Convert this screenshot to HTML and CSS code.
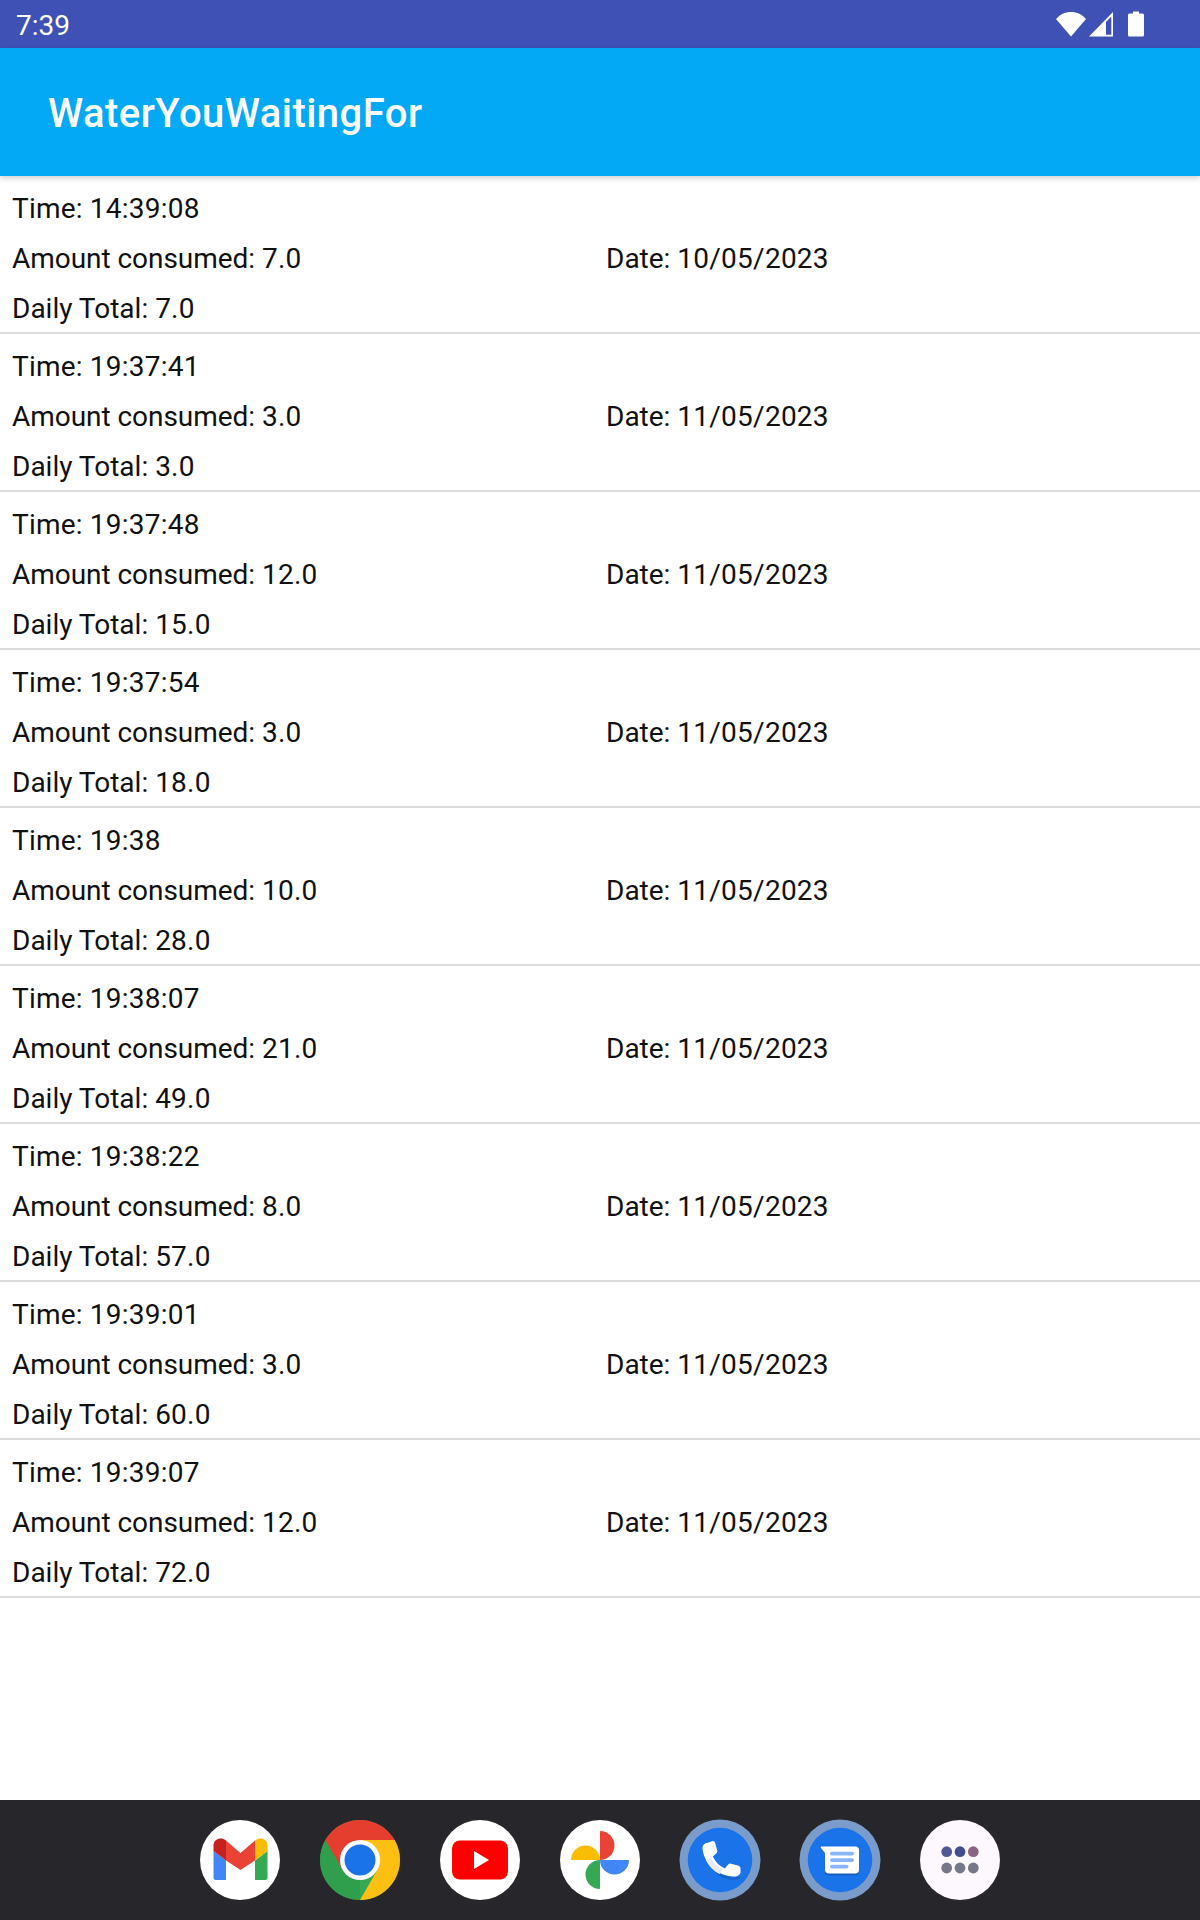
FILE: index.html
```html
<!DOCTYPE html>
<html lang="en">
<head>
    <meta charset="UTF-8">
    <meta name="viewport" content="width=device-width, initial-scale=1.0">
    <title>WaterYouWaitingFor</title>
    <link rel="stylesheet" href="styles.css">
</head>
<body>
    <div class="screen">
        <div class="status-bar">
            <span class="clock">7:39</span>
            <div class="status-icons">
                <svg class="wifi" width="30" height="26" viewBox="0 0 30 26"><path d="M0 8C4 3.500 9 1 15 1s11 2.500 15 7L15 25.500z" fill="#fff"/></svg>
                <svg class="signal" width="24" height="26" viewBox="0 0 24 26"><path d="M24 1v24.500H0z" fill="#fff"/><path d="M17 11l5.300-5.500v18.300H17z" fill="#3f51b5"/></svg>
                <svg class="battery" width="16" height="26" viewBox="0 0 16 26"><path d="M5 0.500h6v2h3.500A1.500 1.500 0 0 1 16 4v20a1.500 1.500 0 0 1-1.500 1.500h-13A1.500 1.500 0 0 1 0 24V4a1.500 1.500 0 0 1 1.500-1.500H5z" fill="#fff"/></svg>
            </div>
        </div>
        <header class="app-bar">WaterYouWaitingFor</header>

        <main class="list">
            <div class="entry">
                <p><span class="time">Time:</span> <span class="val">14:39:08</span></p>
                <div class="entry-row"><p><span class="amount">Amount consumed:</span> <span class="val">7.0</span></p><p>Date: <span class="val">10/05/2023</span></p></div>
                <p>Daily Total: <span class="val">7.0</span></p>
            </div>
            <div class="entry">
                <p><span class="time">Time:</span> <span class="val">19:37:41</span></p>
                <div class="entry-row"><p><span class="amount">Amount consumed:</span> <span class="val">3.0</span></p><p>Date: <span class="val">11/05/2023</span></p></div>
                <p>Daily Total: <span class="val">3.0</span></p>
            </div>
            <div class="entry">
                <p><span class="time">Time:</span> <span class="val">19:37:48</span></p>
                <div class="entry-row"><p><span class="amount">Amount consumed:</span> <span class="val">12.0</span></p><p>Date: <span class="val">11/05/2023</span></p></div>
                <p>Daily Total: <span class="val">15.0</span></p>
            </div>
            <div class="entry">
                <p><span class="time">Time:</span> <span class="val">19:37:54</span></p>
                <div class="entry-row"><p><span class="amount">Amount consumed:</span> <span class="val">3.0</span></p><p>Date: <span class="val">11/05/2023</span></p></div>
                <p>Daily Total: <span class="val">18.0</span></p>
            </div>
            <div class="entry">
                <p><span class="time">Time:</span> <span class="val">19:38</span></p>
                <div class="entry-row"><p><span class="amount">Amount consumed:</span> <span class="val">10.0</span></p><p>Date: <span class="val">11/05/2023</span></p></div>
                <p>Daily Total: <span class="val">28.0</span></p>
            </div>
            <div class="entry">
                <p><span class="time">Time:</span> <span class="val">19:38:07</span></p>
                <div class="entry-row"><p><span class="amount">Amount consumed:</span> <span class="val">21.0</span></p><p>Date: <span class="val">11/05/2023</span></p></div>
                <p>Daily Total: <span class="val">49.0</span></p>
            </div>
            <div class="entry">
                <p><span class="time">Time:</span> <span class="val">19:38:22</span></p>
                <div class="entry-row"><p><span class="amount">Amount consumed:</span> <span class="val">8.0</span></p><p>Date: <span class="val">11/05/2023</span></p></div>
                <p>Daily Total: <span class="val">57.0</span></p>
            </div>
            <div class="entry">
                <p><span class="time">Time:</span> <span class="val">19:39:01</span></p>
                <div class="entry-row"><p><span class="amount">Amount consumed:</span> <span class="val">3.0</span></p><p>Date: <span class="val">11/05/2023</span></p></div>
                <p>Daily Total: <span class="val">60.0</span></p>
            </div>
            <div class="entry">
                <p><span class="time">Time:</span> <span class="val">19:39:07</span></p>
                <div class="entry-row"><p><span class="amount">Amount consumed:</span> <span class="val">12.0</span></p><p>Date: <span class="val">11/05/2023</span></p></div>
                <p>Daily Total: <span class="val">72.0</span></p>
            </div>
        </main>

        <nav class="dock">
            <!-- Gmail -->
            <svg class="dock-icon" viewBox="0 0 80 80">
                <circle cx="40" cy="40" r="40" fill="#fff"/>
                <path d="M13.500 31 26 40.500v19.500H16a2.500 2.500 0 0 1-2.500-2.500z" fill="#4285f4"/>
                <path d="M55 40.500 67.500 31v26.500A2.500 2.500 0 0 1 65 60H55z" fill="#34a853"/>
                <path d="M13.500 31v-6c0-6 7.500-8.500 12-5L26 20.500v20z" fill="#c5221f"/>
                <path d="M55 20.500l.5-.5c4.500-3.500 12-1 12 5v6L55 40.500z" fill="#fbbc04"/>
                <path d="M26 20.500 40.500 33 55 20.500v20L40.500 50 26 40.500z" fill="#ea4335"/>
            </svg>
            <!-- Chrome -->
            <svg class="dock-icon" viewBox="0 0 80 80">
                <circle cx="40" cy="40" r="40" fill="#34a853"/>
                <path d="M40 80A40 40 0 0 1 5.360 20L40 40z" fill="#2f9e4d"/>
                <path d="M5.360 20A40 40 0 0 1 74.640 20H40l-17.300 30z" fill="#e53e2e"/>
                <path d="M74.640 20A40 40 0 0 1 40 80l17.300-30L40 20z" fill="#fdbf12"/>
                <circle cx="40" cy="40" r="20" fill="#fff"/>
                <circle cx="40" cy="40" r="15.500" fill="#1a73e8"/>
            </svg>
            <!-- YouTube -->
            <svg class="dock-icon" viewBox="0 0 80 80">
                <circle cx="40" cy="40" r="40" fill="#fff"/>
                <rect x="12" y="20.500" width="56" height="39" rx="8" fill="#f00"/>
                <path d="M34 31v18l15-9z" fill="#fff"/>
            </svg>
            <!-- Photos -->
            <svg class="dock-icon" viewBox="0 0 80 80">
                <circle cx="40" cy="40" r="40" fill="#fff"/>
                <path d="M40 11a14.500 14.500 0 0 1 0 29z" fill="#ea4335"/>
                <path d="M69 40a14.500 14.500 0 0 1-29 0z" fill="#4285f4"/>
                <path d="M40 69a14.500 14.500 0 0 1 0-29z" fill="#34a853"/>
                <path d="M11 40a14.500 14.500 0 0 1 29 0z" fill="#fbbc04"/>
            </svg>
            <!-- Phone -->
            <svg class="dock-icon" viewBox="0 0 80 80">
                <circle cx="40" cy="40" r="40.500" fill="#7a9ccb"/>
                <circle cx="40" cy="40" r="32.300" fill="#1a73e8"/>
                <path d="M24 34c4 12 15 22 30 24l7-2-1 3-8 1C38 58 27 47 24 34z" fill="#1557b0" opacity=".6"/>
                <path d="M27 23c-2 0-4.500 2-4.500 5C23.500 43 37 56 54 56.500c4 0 6.500-2 6.500-4.500v-3.500c0-1.500-1-2.500-2.500-3l-7-1.800c-1.200-.3-2.200 0-3 1l-3.200 3.800c-5.500-2.500-9.500-6.500-12-12l3.500-3c.9-.8 1.200-1.800.9-3l-2-7.500c-.3-1.300-1.300-2-2.700-2z" fill="#fff"/>
                <path d="M30.800 37.500c2.500 5.500 6.500 9.500 12 12l-3.300 4.500c-6-3-11-8-13.500-14z" fill="#e8eaed"/>
            </svg>
            <!-- Messages -->
            <svg class="dock-icon" viewBox="0 0 80 80">
                <circle cx="40" cy="40" r="40.500" fill="#7a9ccb"/>
                <circle cx="40" cy="40" r="32.300" fill="#1a73e8"/>
                <path d="M25 34h34v18c0 2-1.500 3.500-3.500 3.500h-27c-2 0-3.500-1.500-3.500-3.500z" fill="#1557b0" opacity=".8"/>
                <path d="M21.500 26.500h34c2 0 3.500 1.500 3.500 3.500v20c0 2-1.500 3.500-3.500 3.500h-27c-2 0-3.500-1.500-3.500-3.500V33l-4-5c-.6-.8-.3-1.500.5-1.500z" fill="#fff"/>
                <rect x="30" y="31.700" width="24" height="3.800" rx="1.900" fill="#8ab4f8"/>
                <rect x="30" y="38.200" width="24" height="3.800" rx="1.900" fill="#8ab4f8"/>
                <rect x="30" y="44.700" width="18.500" height="3.800" rx="1.900" fill="#8ab4f8"/>
            </svg>
            <!-- App drawer -->
            <svg class="dock-icon" viewBox="0 0 80 80">
                <circle cx="40" cy="40" r="40" fill="#fdf8fd"/>
                <circle cx="26.700" cy="31.700" r="5.400" fill="#515a94"/>
                <circle cx="40" cy="31.700" r="5.400" fill="#414d8f"/>
                <circle cx="53.300" cy="31.700" r="5.400" fill="#8b6484"/>
                <circle cx="26.700" cy="48" r="5.400" fill="#767789"/>
                <circle cx="40" cy="48" r="5.400" fill="#767789"/>
                <circle cx="53.300" cy="48" r="5.400" fill="#767789"/>
            </svg>
        </nav>
    </div>
</body>
</html>
```

FILE: styles.css
```css
* {
    box-sizing: border-box;
}

body {
    margin: 0;
    font-family: Roboto, "Noto Sans", sans-serif;
    background-color: #fff;
    color: #111;
}

p {
    margin: 0;
}

.screen {
    width: 1200px;
    height: 1920px;
    display: flex;
    flex-direction: column;
    overflow: hidden;
}

.status-bar {
    height: 48px;
    flex: none;
    background-color: #3f51b5;
    color: #fff;
    display: flex;
    align-items: center;
    justify-content: space-between;
    padding: 2px 56px 0 16px;
}

.clock {
    font-size: 28px;
}

.status-icons {
    display: flex;
    align-items: center;
    margin-top: -2px;
}

.status-icons svg {
    display: block;
}

.signal {
    margin: 0 15px 0 3px;
}

.app-bar {
    height: 128px;
    flex: none;
    background-color: #03a9f4;
    color: #fff;
    font-size: 40px;
    font-weight: 500;
    letter-spacing: 0.45px;
    display: flex;
    align-items: center;
    padding: 3px 0 0 48px;
    box-shadow: 0 2px 6px rgba(0, 0, 0, 0.2);
    position: relative;
}

.list {
    flex: 1;
}

.entry {
    height: 158px;
    padding-top: 8px;
    border-bottom: 2px solid #ddd;
    font-size: 28px;
    line-height: 50px;
}

.entry p {
    padding-left: 12px;
}

.entry .val {
    letter-spacing: 0.25px;
}

.entry .time {
    letter-spacing: 0.2px;
}

.entry .amount {
    letter-spacing: -0.05px;
}

.entry-row {
    display: grid;
    grid-template-columns: 594px 1fr;
}

.dock {
    height: 120px;
    flex: none;
    background-color: #26262b;
    display: flex;
    justify-content: center;
    align-items: center;
    gap: 40px;
}

.dock-icon {
    width: 80px;
    height: 80px;
    display: block;
    overflow: visible;
}
```
